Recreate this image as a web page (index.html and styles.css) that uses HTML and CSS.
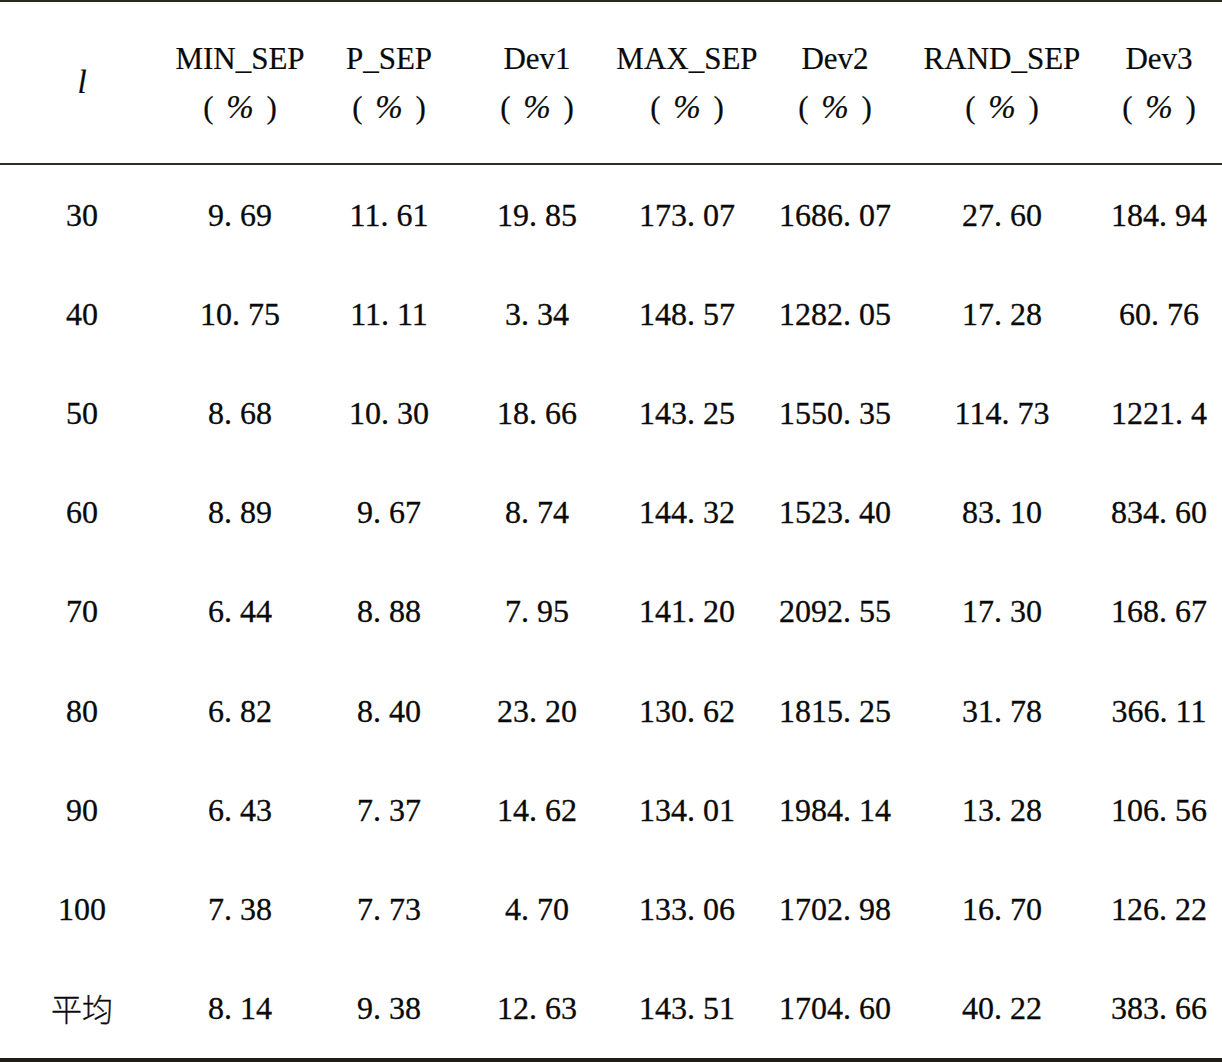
FILE: index.html
```html
<!DOCTYPE html>
<html lang="zh">
<head>
<meta charset="utf-8">
<title>Table</title>
<link rel="stylesheet" href="styles.css">
</head>
<body>
<table class="data">
  <colgroup>
    <col class="c1"><col class="c2"><col class="c3"><col class="c4"><col class="c5"><col class="c6"><col class="c7"><col class="c8">
  </colgroup>
  <thead>
    <tr>
      <th><i class="var">l</i></th>
      <th>MIN_SEP<br><span class="pct">( <span class="sym">%</span> )</span></th>
      <th>P_SEP<br><span class="pct">( <span class="sym">%</span> )</span></th>
      <th>Dev1<br><span class="pct">( <span class="sym">%</span> )</span></th>
      <th>MAX_SEP<br><span class="pct">( <span class="sym">%</span> )</span></th>
      <th>Dev2<br><span class="pct">( <span class="sym">%</span> )</span></th>
      <th>RAND_SEP<br><span class="pct">( <span class="sym">%</span> )</span></th>
      <th>Dev3<br><span class="pct">( <span class="sym">%</span> )</span></th>
    </tr>
  </thead>
  <tbody>
    <tr><td>30</td><td>9. 69</td><td>11. 61</td><td>19. 85</td><td>173. 07</td><td>1686. 07</td><td>27. 60</td><td>184. 94</td></tr>
    <tr><td>40</td><td>10. 75</td><td>11. 11</td><td>3. 34</td><td>148. 57</td><td>1282. 05</td><td>17. 28</td><td>60. 76</td></tr>
    <tr><td>50</td><td>8. 68</td><td>10. 30</td><td>18. 66</td><td>143. 25</td><td>1550. 35</td><td>114. 73</td><td>1221. 4</td></tr>
    <tr><td>60</td><td>8. 89</td><td>9. 67</td><td>8. 74</td><td>144. 32</td><td>1523. 40</td><td>83. 10</td><td>834. 60</td></tr>
    <tr><td>70</td><td>6. 44</td><td>8. 88</td><td>7. 95</td><td>141. 20</td><td>2092. 55</td><td>17. 30</td><td>168. 67</td></tr>
    <tr><td>80</td><td>6. 82</td><td>8. 40</td><td>23. 20</td><td>130. 62</td><td>1815. 25</td><td>31. 78</td><td>366. 11</td></tr>
    <tr><td>90</td><td>6. 43</td><td>7. 37</td><td>14. 62</td><td>134. 01</td><td>1984. 14</td><td>13. 28</td><td>106. 56</td></tr>
    <tr><td>100</td><td>7. 38</td><td>7. 73</td><td>4. 70</td><td>133. 06</td><td>1702. 98</td><td>16. 70</td><td>126. 22</td></tr>
    <tr><td class="cjk">平均</td><td>8. 14</td><td>9. 38</td><td>12. 63</td><td>143. 51</td><td>1704. 60</td><td>40. 22</td><td>383. 66</td></tr>
  </tbody>
</table>
</body>
</html>
```

FILE: styles.css
```css
html, body {
  margin: 0;
  padding: 0;
  background: #ffffff;
}

body {
  font-family: "Liberation Serif", "Times New Roman", "Noto Sans CJK SC", serif;
  color: #0a0a0a;
}

.data {
  width: 1222px;
  border-collapse: collapse;
  table-layout: fixed;
  border-top: 2px solid #262b1c;
  border-bottom: 4px solid #211d12;
}

.c1 { width: 164px; }
.c2 { width: 152px; }
.c3 { width: 146px; }
.c4 { width: 150px; }
.c5 { width: 150px; }
.c6 { width: 146px; }
.c7 { width: 188px; }
.c8 { width: 126px; }

.data thead tr {
  height: 163px;
  border-bottom: 2px solid #2a2f1f;
}

.data th {
  font-weight: normal;
  font-size: 31px;
  line-height: 49px;
  text-align: center;
  vertical-align: middle;
  padding: 0;
  white-space: nowrap;
  -webkit-text-stroke: 0.2px #0a0a0a;
}

.pct {
  word-spacing: 5px;
}

.sym {
  font-style: italic;
  font-size: 33px;
}

.var {
  font-style: italic;
  font-size: 33px;
}

.data td {
  height: 99.2px;
  padding: 0;
  font-size: 32px;
  line-height: 36px;
  text-align: center;
  vertical-align: middle;
  white-space: nowrap;
  -webkit-text-stroke: 0.3px #0a0a0a;
}

.data td.cjk {
  font-family: "Noto Sans CJK SC", sans-serif;
  font-weight: 300;
  font-size: 31px;
}
```
